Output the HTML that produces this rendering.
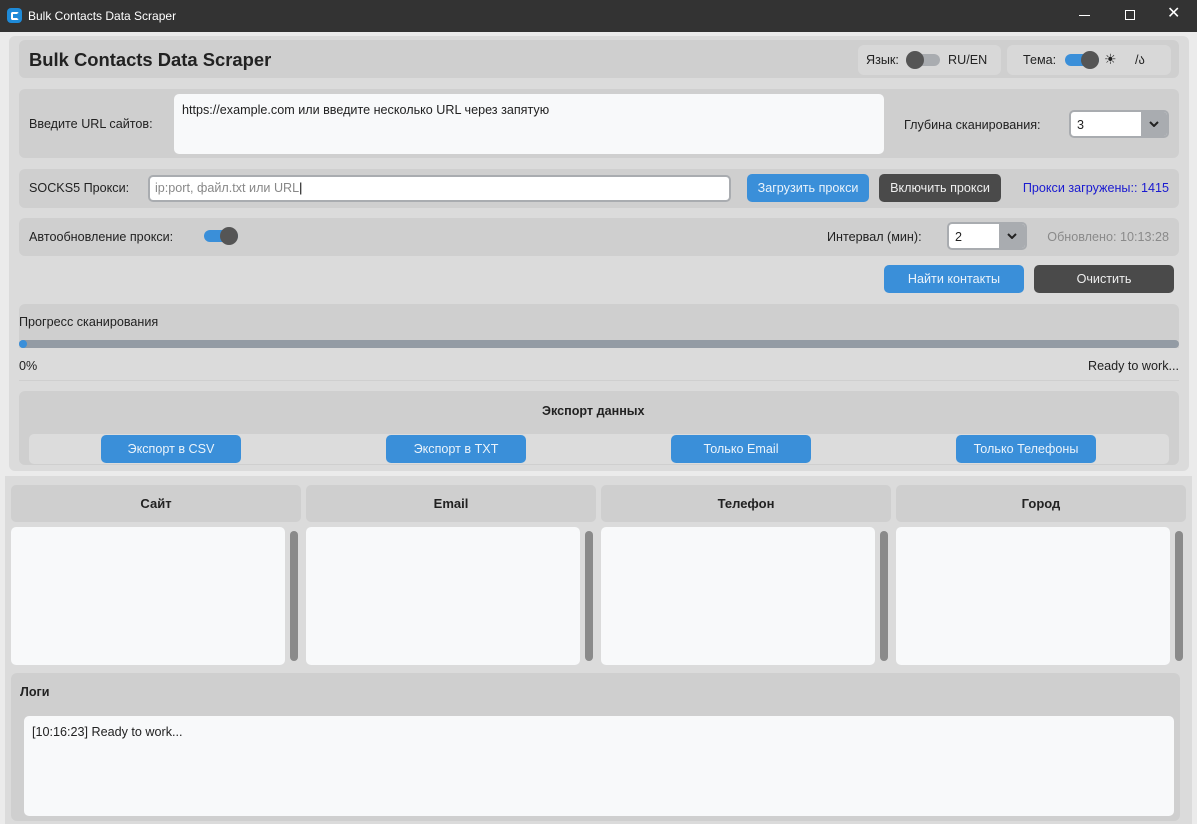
<!DOCTYPE html>
<html><head><meta charset="utf-8"><style>
*{box-sizing:border-box;margin:0;padding:0}
body{width:1197px;height:824px;background:#ebebeb;font-family:"Liberation Sans","DejaVu Sans",sans-serif;font-size:12.6px;color:#222;position:relative;overflow:hidden}
.a{position:absolute}
.f{position:absolute;background:#cfcfcf;border-radius:6px}
.w{position:absolute;background:#f8f9fa;border-radius:5px}
.btn{position:absolute;border-radius:5px;color:#fff;font-size:12.6px;display:flex;align-items:center;justify-content:center}
.blue{background:#3a8fd9;color:#eaf3fb}
.dark{background:#4a4a4a;color:#eee}
.t{position:absolute;white-space:nowrap;line-height:16px}
.dd{position:absolute;border:2px solid #a9acb0;border-radius:5px;background:#fff;overflow:hidden}
.dd .ar{position:absolute;right:0;top:0;bottom:0;width:26px;background:#a9acb0;display:flex;align-items:center;justify-content:center}
.tg{position:absolute;width:34px;height:12px;border-radius:6px}
.kn{position:absolute;width:18px;height:18px;border-radius:9px;background:#555;top:-3px}
.hd{position:absolute;background:#cfcfcf;border-radius:5px;font-weight:bold;display:flex;align-items:center;justify-content:center;font-size:13px}
.sb{position:absolute;width:8px;background:#8a8a8a;border-radius:4px}
</style></head><body>
<div class="a" style="left:0;top:0;width:1197px;height:32px;background:#333"></div>
<div class="a" style="left:7px;top:8px;width:15px;height:15px;border-radius:4px;background:#1e8ad8"></div>
<div class="a" style="left:11px;top:12px;width:8px;height:8px;border:2px solid #fff;border-right-color:#1e8ad8;border-radius:2px"></div>
<div class="t" style="left:28px;top:8px;color:#fff;font-size:12px">Bulk Contacts Data Scraper</div>
<div class="a" style="left:1079px;top:15px;width:11px;height:1px;background:#fff"></div>
<div class="a" style="left:1125px;top:10px;width:10px;height:10px;border:1px solid #fff"></div>
<div class="t" style="left:1167px;top:6px;color:#fff;font-size:16px">✕</div>

<div class="a" style="left:9px;top:36px;width:1180px;height:435px;background:#dbdbdb;border-radius:6px"></div>
<div class="f" style="left:19px;top:40px;width:1160px;height:38px"></div>
<div class="t" style="left:29px;top:49px;font-size:18.4px;font-weight:bold;line-height:22px">Bulk Contacts Data Scraper</div>
<div class="a" style="left:858px;top:45px;width:143px;height:30px;background:#d8d8d8;border-radius:6px"></div>
<div class="a" style="left:1007px;top:45px;width:164px;height:30px;background:#d8d8d8;border-radius:6px"></div>
<div class="t" style="left:866px;top:52px">Язык:</div>
<div class="tg" style="left:906px;top:54px;background:#a9acb0"><div class="kn" style="left:0"></div></div>
<div class="t" style="left:948px;top:52px">RU/EN</div>
<div class="t" style="left:1023px;top:52px">Тема:</div>
<div class="tg" style="left:1065px;top:54px;background:#3a8fd9"><div class="kn" style="left:16px"></div></div>
<div class="t" style="left:1104px;top:51px;font-size:14px">☀</div>
<div class="t" style="left:1135px;top:52px">/ა</div>

<div class="f" style="left:19px;top:89px;width:1160px;height:69px"></div>
<div class="t" style="left:29px;top:116px">Введите URL сайтов:</div>
<div class="w" style="left:174px;top:94px;width:710px;height:60px"></div>
<div class="t" style="left:182px;top:102px">https://example.com или введите несколько URL через запятую</div>
<div class="t" style="left:904px;top:117px">Глубина сканирования:</div>
<div class="dd" style="left:1069px;top:110px;width:100px;height:28px"><div class="t" style="left:6px;top:5px">3</div><div class="ar"><svg width="10" height="6"><path d="M1 1L5 5L9 1" stroke="#222" stroke-width="2" fill="none"/></svg></div></div>

<div class="f" style="left:19px;top:169px;width:1160px;height:39px"></div>
<div class="t" style="left:29px;top:180px">SOCKS5 Прокси:</div>
<div class="a" style="left:148px;top:175px;width:583px;height:27px;background:#fff;border:2px solid #a9acb0;border-radius:5px"></div>
<div class="t" style="left:155px;top:180px;color:#888">ip:port, файл.txt или URL<span style="color:#000">|</span></div>
<div class="btn blue" style="left:747px;top:174px;width:122px;height:28px">Загрузить прокси</div>
<div class="btn dark" style="left:879px;top:174px;width:122px;height:28px">Включить прокси</div>
<div class="t" style="right:28px;top:180px;color:#1a1ad0">Прокси загружены:: 1415</div>

<div class="f" style="left:19px;top:218px;width:1160px;height:38px"></div>
<div class="t" style="left:29px;top:229px">Автообновление прокси:</div>
<div class="tg" style="left:204px;top:230px;background:#3a8fd9"><div class="kn" style="left:16px"></div></div>
<div class="t" style="left:827px;top:229px">Интервал (мин):</div>
<div class="dd" style="left:947px;top:222px;width:80px;height:28px"><div class="t" style="left:6px;top:5px">2</div><div class="ar"><svg width="10" height="6"><path d="M1 1L5 5L9 1" stroke="#222" stroke-width="2" fill="none"/></svg></div></div>
<div class="t" style="right:28px;top:229px;color:#8a8a8a">Обновлено: 10:13:28</div>

<div class="btn blue" style="left:884px;top:265px;width:140px;height:28px">Найти контакты</div>
<div class="btn dark" style="left:1034px;top:265px;width:140px;height:28px">Очистить</div>

<div class="f" style="left:19px;top:304px;width:1160px;height:44px;border-radius:6px 6px 0 0"></div>
<div class="t" style="left:19px;top:314px">Прогресс сканирования</div>
<div class="a" style="left:19px;top:340px;width:1160px;height:8px;background:#939ba4;border-radius:4px"></div>
<div class="a" style="left:19px;top:340px;width:8px;height:8px;background:#3a8fd9;border-radius:4px"></div>
<div class="t" style="left:19px;top:358px">0%</div>
<div class="t" style="right:18px;top:358px">Ready to work...</div>
<div class="a" style="left:19px;top:380px;width:1160px;height:1px;background:#cfcfcf"></div>

<div class="f" style="left:19px;top:391px;width:1160px;height:74px"></div>
<div class="t" style="left:542px;top:403px;font-weight:bold">Экспорт данных</div>
<div class="a" style="left:29px;top:434px;width:1140px;height:30px;background:#dcdcdc;border-radius:5px"></div>
<div class="btn blue" style="left:101px;top:435px;width:140px;height:28px">Экспорт в CSV</div>
<div class="btn blue" style="left:386px;top:435px;width:140px;height:28px">Экспорт в TXT</div>
<div class="btn blue" style="left:671px;top:435px;width:140px;height:28px">Только Email</div>
<div class="btn blue" style="left:956px;top:435px;width:140px;height:28px">Только Телефоны</div>

<div class="a" style="left:5px;top:476px;width:1187px;height:348px;background:#dbdbdb"></div>
<div class="hd" style="left:11px;top:485px;width:290px;height:37px">Сайт</div>
<div class="hd" style="left:306px;top:485px;width:290px;height:37px">Email</div>
<div class="hd" style="left:601px;top:485px;width:290px;height:37px">Телефон</div>
<div class="hd" style="left:896px;top:485px;width:290px;height:37px">Город</div>
<div class="w" style="left:11px;top:527px;width:274px;height:138px"></div>
<div class="w" style="left:306px;top:527px;width:274px;height:138px"></div>
<div class="w" style="left:601px;top:527px;width:274px;height:138px"></div>
<div class="w" style="left:896px;top:527px;width:274px;height:138px"></div>
<div class="sb" style="left:290px;top:531px;height:130px"></div>
<div class="sb" style="left:585px;top:531px;height:130px"></div>
<div class="sb" style="left:880px;top:531px;height:130px"></div>
<div class="sb" style="left:1175px;top:531px;height:130px"></div>

<div class="f" style="left:11px;top:673px;width:1169px;height:148px"></div>
<div class="t" style="left:20px;top:684px;font-weight:bold">Логи</div>
<div class="w" style="left:24px;top:716px;width:1150px;height:100px"></div>
<div class="t" style="left:32px;top:724px">[10:16:23] Ready to work...</div>
</body></html>
